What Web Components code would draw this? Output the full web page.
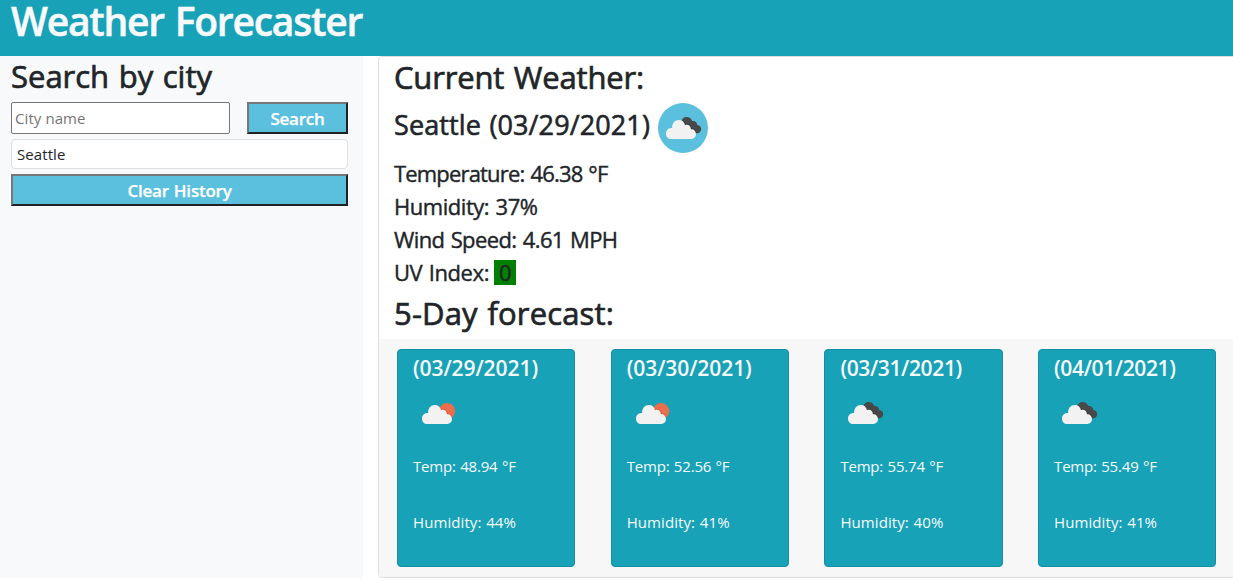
<!DOCTYPE html>
<html lang="en">
<head>
<meta charset="utf-8">
<title>Weather Forecaster</title>
<style>
body{margin:0;background:#fff;color:#212529;font-family:"Open Sans","Noto Sans",sans-serif;overflow:hidden}
</style>
</head>
<body>
<weather-app></weather-app>
<script>
const define=(name,html,setup)=>{
  const t=document.createElement('template');t.innerHTML=html;
  customElements.define(name,class extends HTMLElement{
    connectedCallback(){
      if(this.shadowRoot)return;
      this.attachShadow({mode:'open'}).append(t.content.cloneNode(true));
      if(setup)setup(this,this.shadowRoot);
    }
  });
};

// A single line of text tracked to a given measure.
define('text-line',`<style>
:host{display:block;white-space:nowrap;word-spacing:.05em}
span{display:inline-block}
</style><span><slot></slot></span>`,(el,root)=>{
  const s=root.querySelector('span');
  const w=parseFloat(el.getAttribute('measure'));
  const n=el.textContent.length;
  if(w&&n)s.style.letterSpacing=((w-s.getBoundingClientRect().width)/n).toFixed(4)+'px';
});

define('weather-icon',`<style>
:host{display:block;width:50px;height:50px}
svg{display:block}
.sun,.dark{display:none}
:host([kind=sun]) .sun,:host([kind=clouds]) .dark{display:block}
</style>
<svg width="50" height="50" viewBox="0 0 50 50">
<circle class="sun" cx="33" cy="23.3" r="8.2" fill="#ec6e4c"/>
<path class="dark" fill="#48484a" d="M23 19C23.8 15.700 26 14 28.700 14C31.300 14 33.500 15.600 34.200 18.100C37 17.500 39.200 19.300 39.300 22.100C41.700 22.300 43.200 24 43.200 26.300C43.200 28.700 41.500 30.200 39.300 30.200H36L23 22Z"/>
<path fill="none" stroke="#000" stroke-opacity=".14" stroke-width=".8" d="M26.800 21.800C30 20.200 33 22 33.300 25.600C36 25.200 38 27 38.200 30"/>
<path fill="#f2f2f2" d="M13.300 36C10.200 36 8 33.700 8 30.700C8 27.700 10.100 25.400 13.100 25.100H14.100C13.900 20.400 16.800 17 20.900 17C24 17 26.200 18.900 27 22.200C30.100 21 32.700 22.700 32.900 26.200C35.700 25.900 38 28.100 38 31.100C38 34 36 36 33.300 36Z"/>
</svg>`);

define('app-header',`<style>
:host{display:block;box-sizing:border-box;height:56px;padding-left:11px;background:#17a2b8;color:#f8f9fa}
h1{margin:0;font-size:39px;line-height:42px;font-weight:600;-webkit-text-stroke:.5px currentColor}
</style><h1><text-line measure="351">Weather Forecaster</text-line></h1>`);

define('ui-button',`<style>
:host{display:block}
button{box-sizing:border-box;width:100%;height:32px;display:flex;align-items:center;justify-content:center;padding:1px 0 0;border:2px solid;border-color:#767676 #212121 #212121 #767676;background:#5bc0de;color:#fff;font:600 17px/24px "Open Sans","Noto Sans",sans-serif;-webkit-text-stroke:.25px currentColor}
</style><button><slot></slot></button>`);

define('search-panel',`<style>
:host{display:block;box-sizing:border-box;width:363px;height:522px;padding:0 15px 0 11px;background:#f8f9fa}
h2{margin:0 0 6px;font-size:31px;line-height:40px;font-weight:400;-webkit-text-stroke:.7px currentColor}
.row{display:grid;grid-template-columns:219px 101px;gap:17px}
input{box-sizing:border-box;width:100%;height:32px;margin:0;padding:1px 3px;border:1px solid #767676;border-radius:2px;background:#fff;font:400 15px "Open Sans","Noto Sans",sans-serif;letter-spacing:.08px}
input::placeholder{color:#757575}
.item{box-sizing:border-box;height:30px;margin:5px 0;padding-left:5px;border:1px solid #dfdfdf;border-radius:4px;background:#fff;font-size:15px;line-height:28px}
</style>
<h2><text-line measure="201">Search by city</text-line></h2>
<div class="row"><input placeholder="City name"><ui-button><text-line measure="54">Search</text-line></ui-button></div>
<div class="item"><text-line measure="48.500">Seattle</text-line></div>
<ui-button><text-line measure="104">Clear History</text-line></ui-button>`);

define('forecast-card',`<style>
:host{display:block;box-sizing:border-box;height:218px;padding-left:15px;border:1px solid #158fa3;border-radius:4px;background:#17a2b8;color:#f8f9fa}
h4{margin:0;font-size:21px;line-height:36px;font-weight:600}
weather-icon{margin-top:2px}
weather-icon[kind=sun]{margin-left:1px}
.stat{font-size:15px;line-height:24px}
.temp{margin-top:16px}
.hum{margin-top:32px}
</style>
<h4><text-line class="date" measure="125"></text-line></h4>
<weather-icon></weather-icon>
<text-line class="stat temp" measure="102.700"></text-line>
<text-line class="stat hum" measure="103"></text-line>`,(el,root)=>{
  const put=(cls,text)=>{
    const line=root.querySelector(cls);line.textContent=text;
    const s=line.shadowRoot.querySelector('span');s.style.letterSpacing='0';
    s.style.letterSpacing=((parseFloat(line.getAttribute('measure'))-s.getBoundingClientRect().width)/text.length).toFixed(4)+'px';
  };
  if(el.hasAttribute('date-measure'))root.querySelector('.date').setAttribute('measure',el.getAttribute('date-measure'));
  root.querySelector('weather-icon').setAttribute('kind',el.getAttribute('icon'));
  put('.date','('+el.getAttribute('date')+')');
  put('.temp','Temp: '+el.getAttribute('temp')+' °F');
  put('.hum','Humidity: '+el.getAttribute('humidity')+'%');
});

define('weather-panel',`<style>
:host{display:block;box-sizing:border-box;width:870px;height:522px;border:1px solid #dfdfdf;border-radius:4px;overflow:hidden;background:#fff}
.body{box-sizing:border-box;height:282px;padding-left:15px}
h2,h3,.stat{font-weight:400;-webkit-text-stroke:.7px currentColor}
h2{margin:0;font-size:31px;line-height:40px}
.city{display:flex;align-items:flex-start;gap:8px;height:54px;padding-top:6px}
h3{margin:0;font-size:27px;line-height:43px;-webkit-text-stroke-width:.6px}
.city weather-icon{border-radius:50%;background:#5bc0de}
.stat{display:flex;height:33px;font-size:22px;line-height:33px;-webkit-text-stroke-width:.4px}
.badge{box-sizing:border-box;width:22px;height:25px;margin:4px 0 0 5px;padding-left:5px;background:green;line-height:25px}
.five{margin-top:4px}
.days{display:grid;grid-template-columns:repeat(4,178.300px);column-gap:35.400px;height:238px;box-sizing:border-box;padding:10px 0 0 18px;background:#f7f7f7}
</style>
<div class="body">
<h2><text-line measure="250">Current Weather:</text-line></h2>
<div class="city"><h3><text-line measure="256">Seattle (03/29/2021)</text-line></h3><weather-icon kind="clouds"></weather-icon></div>
<div class="stat"><text-line measure="213.500">Temperature: 46.38 °F</text-line></div>
<div class="stat"><text-line measure="143.500">Humidity: 37%</text-line></div>
<div class="stat"><text-line measure="223.500">Wind Speed: 4.61 MPH</text-line></div>
<div class="stat"><text-line measure="95">UV Index:</text-line><div class="badge">0</div></div>
<h2 class="five"><text-line measure="220">5-Day forecast:</text-line></h2>
</div>
<div class="days">
<forecast-card date="03/29/2021" icon="sun" temp="48.94" humidity="44"></forecast-card>
<forecast-card date="03/30/2021" icon="sun" temp="52.56" humidity="41"></forecast-card>
<forecast-card date="03/31/2021" date-measure="121.500" icon="clouds" temp="55.74" humidity="40"></forecast-card>
<forecast-card date="04/01/2021" date-measure="121.500" icon="clouds" temp="55.49" humidity="41"></forecast-card>
</div>`);

define('weather-app',`<style>
:host{display:block;width:1233px;height:581px}
main{display:flex;gap:15px}
search-panel,weather-panel{flex:none}
</style><app-header></app-header><main><search-panel></search-panel><weather-panel></weather-panel></main>`);
</script>
</body>
</html>
